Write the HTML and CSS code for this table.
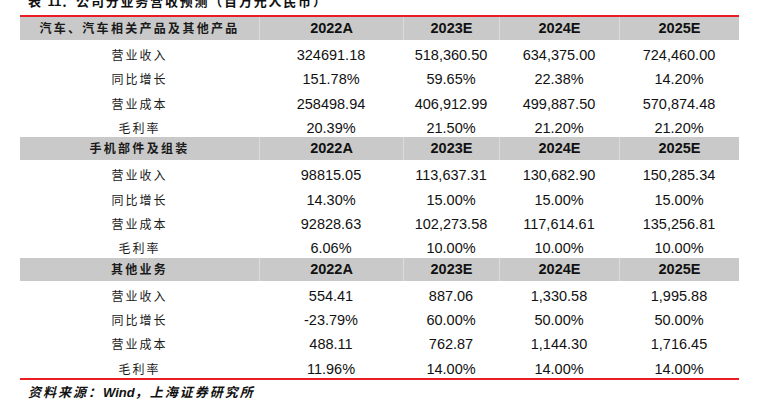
FILE: index.html
```html
<!DOCTYPE html>
<html lang="zh-CN">
<head>
<meta charset="utf-8">
<title>公司分业务营收预测</title>
<link rel="stylesheet" href="styles.css">
</head>
<body>
<div class="page">
  <div class="title">表 <span class="num">11</span>：公司分业务营收预测（百万元人民币）</div>
  <div class="table">
    <div class="row head"><div class="cell label">汽车、汽车相关产品及其他产品</div><div class="cell">2022A</div><div class="cell">2023E</div><div class="cell">2024E</div><div class="cell">2025E</div></div>
    <div class="row"><div class="cell label">营业收入</div><div class="cell">324691.18</div><div class="cell">518,360.50</div><div class="cell">634,375.00</div><div class="cell">724,460.00</div></div>
    <div class="row"><div class="cell label">同比增长</div><div class="cell">151.78%</div><div class="cell">59.65%</div><div class="cell">22.38%</div><div class="cell">14.20%</div></div>
    <div class="row"><div class="cell label">营业成本</div><div class="cell">258498.94</div><div class="cell">406,912.99</div><div class="cell">499,887.50</div><div class="cell">570,874.48</div></div>
    <div class="row"><div class="cell label">毛利率</div><div class="cell">20.39%</div><div class="cell">21.50%</div><div class="cell">21.20%</div><div class="cell">21.20%</div></div>

    <div class="row head"><div class="cell label">手机部件及组装</div><div class="cell">2022A</div><div class="cell">2023E</div><div class="cell">2024E</div><div class="cell">2025E</div></div>
    <div class="row"><div class="cell label">营业收入</div><div class="cell">98815.05</div><div class="cell">113,637.31</div><div class="cell">130,682.90</div><div class="cell">150,285.34</div></div>
    <div class="row"><div class="cell label">同比增长</div><div class="cell">14.30%</div><div class="cell">15.00%</div><div class="cell">15.00%</div><div class="cell">15.00%</div></div>
    <div class="row"><div class="cell label">营业成本</div><div class="cell">92828.63</div><div class="cell">102,273.58</div><div class="cell">117,614.61</div><div class="cell">135,256.81</div></div>
    <div class="row"><div class="cell label">毛利率</div><div class="cell">6.06%</div><div class="cell">10.00%</div><div class="cell">10.00%</div><div class="cell">10.00%</div></div>

    <div class="row head"><div class="cell label">其他业务</div><div class="cell">2022A</div><div class="cell">2023E</div><div class="cell">2024E</div><div class="cell">2025E</div></div>
    <div class="row"><div class="cell label">营业收入</div><div class="cell">554.41</div><div class="cell">887.06</div><div class="cell">1,330.58</div><div class="cell">1,995.88</div></div>
    <div class="row"><div class="cell label">同比增长</div><div class="cell">-23.79%</div><div class="cell">60.00%</div><div class="cell">50.00%</div><div class="cell">50.00%</div></div>
    <div class="row"><div class="cell label">营业成本</div><div class="cell">488.11</div><div class="cell">762.87</div><div class="cell">1,144.30</div><div class="cell">1,716.45</div></div>
    <div class="row last"><div class="cell label">毛利率</div><div class="cell">11.96%</div><div class="cell">14.00%</div><div class="cell">14.00%</div><div class="cell">14.00%</div></div>
  </div>
  <div class="source">资料来源：<span class="num">Wind</span>，上海证券研究所</div>
</div>
</body>
</html>
```

FILE: styles.css
```css
html, body {
  margin: 0;
  padding: 0;
  background: #ffffff;
}

body {
  overflow: hidden;
  color: #111111;
  font-family: "Liberation Sans", "Noto Sans CJK SC", sans-serif;
}

.page {
  padding-left: 20px;
  width: 719px;
}

.title {
  margin-top: -7px;
  margin-left: 8px;
  height: 15px;
  line-height: 15px;
  font-family: "Noto Sans CJK SC", sans-serif;
  font-weight: 700;
  font-size: 13px;
  letter-spacing: 1.8px;
  white-space: nowrap;
}

.title .num,
.source .num {
  font-family: "Liberation Sans", sans-serif;
  letter-spacing: 0;
}

.table {
  margin-top: 7px;
  border-top: 2px solid #ec1c24;
  border-bottom: 2px solid #ec1c24;
}

.row {
  display: grid;
  grid-template-columns: 239px 144px 96px 120px 120px;
  height: 24.33px;
}

.row .cell {
  text-align: center;
  font-size: 14.5px;
  line-height: 16px;
  padding-top: 7px;
  white-space: nowrap;
}

.row .label {
  font-family: "Noto Sans CJK SC", sans-serif;
  font-size: 12px;
  letter-spacing: 2px;
  color: #1a1a1a;
}

.row.head {
  height: 23px;
  background: #c9c9c9;
}

.row.head .cell {
  font-weight: 700;
  padding-top: 3px;
}

.row.head .label {
  letter-spacing: 2.3px;
}

.row.head .cell + .cell {
  border-left: 1px solid #dcdcdc;
}

.source {
  margin-left: 8px;
  margin-top: 3px;
  font-family: "Noto Sans CJK SC", sans-serif;
  font-weight: 700;
  font-style: italic;
  font-size: 13px;
  line-height: 17px;
  letter-spacing: 2px;
  white-space: nowrap;
}
```
